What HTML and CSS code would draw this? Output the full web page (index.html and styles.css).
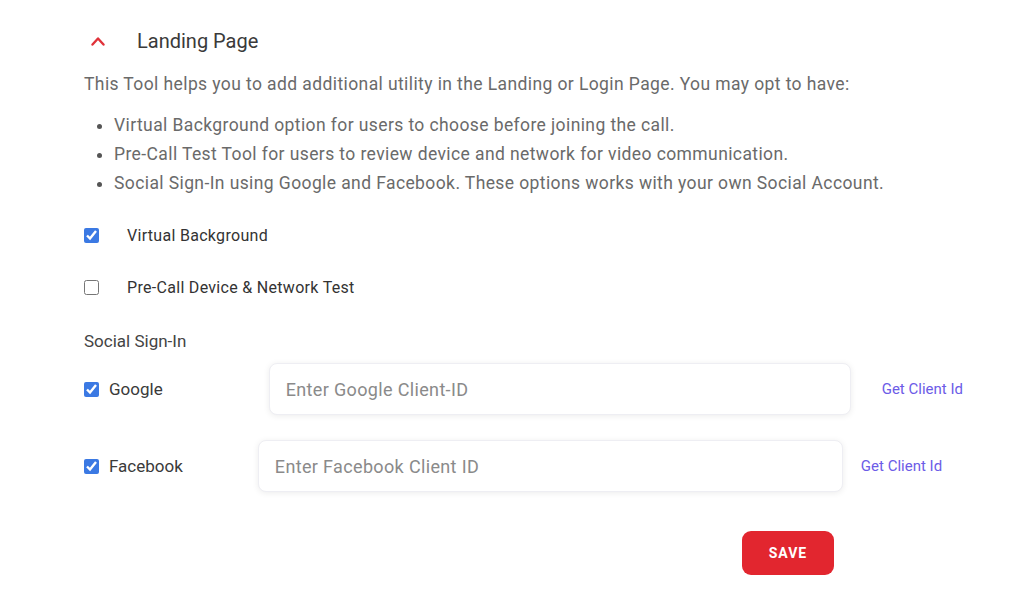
FILE: index.html
```html
<!DOCTYPE html>
<html>
<head>
<meta charset="utf-8">
<link rel="stylesheet" href="styles.css">
</head>
<body>
<div class="panel">
  <div class="header">
    <svg class="chev" width="14" height="10" viewBox="0 0 14 10"><path d="M1.5 8.5 L7 2.5 L12.5 8.5" fill="none" stroke="#e0323a" stroke-width="2.4" stroke-linecap="round" stroke-linejoin="round"/></svg>
    <span class="title">Landing Page</span>
  </div>
  <p class="desc">This Tool helps you to add additional utility in the Landing or Login Page. You may opt to have:</p>
  <ul class="list">
    <li>Virtual Background option for users to choose before joining the call.</li>
    <li>Pre-Call Test Tool for users to review device and network for video communication.</li>
    <li>Social Sign-In using Google and Facebook. These options works with your own Social Account.</li>
  </ul>
  <label class="opt opt-first"><input type="checkbox" class="cb" checked><span>Virtual Background</span></label>
  <label class="opt opt-second"><input type="checkbox" class="cb"><span>Pre-Call Device &amp; Network Test</span></label>
  <div class="social-title">Social Sign-In</div>
  <div class="srow srow-google">
    <label class="slabel"><input type="checkbox" class="cb" checked><span>Google</span></label>
    <input class="field" type="text" placeholder="Enter Google Client-ID">
    <a class="link" href="#">Get Client Id</a>
  </div>
  <div class="srow srow-fb">
    <label class="slabel"><input type="checkbox" class="cb" checked><span>Facebook</span></label>
    <input class="field" type="text" placeholder="Enter Facebook Client ID">
    <a class="link" href="#">Get Client Id</a>
  </div>
  <div class="actions"><button class="save">SAVE</button></div>
</div>
</body>
</html>
```
FILE: styles.css
```css
* { box-sizing: border-box; }
body {
  margin: 0;
  background: #fff;
  font-family: Roboto, "Liberation Sans", sans-serif;
  color: #333;
}
.panel {
  padding: 27px 0 0 84px;
  width: 1034px;
}
.header {
  display: flex;
  align-items: center;
  height: 28px;
}
.chev { margin-left: 7px; }
.title {
  margin-left: 32px;
  font-size: 20px;
  color: #3a3a3a;
}
.desc {
  margin: 17px 0 0 0;
  font-size: 17.5px;
  letter-spacing: 0.4px;
  color: #6a6a6a;
  line-height: 24px;
}
.list {
  margin: 15px 0 0 0;
  padding-left: 30px;
  font-size: 17.5px;
  letter-spacing: 0.4px;
  color: #6a6a6a;
  line-height: 29px;
}
.list li::marker { color: #555; }
.opt {
  display: flex;
  align-items: center;
  font-size: 16px;
  letter-spacing: 0.3px;
  color: #333;
  height: 24px;
}
.opt-first { margin-top: 25px; }
.opt-second { margin-top: 28px; }
.opt span { margin-left: 28px; }
.cb {
  margin: 0;
  width: 15px;
  height: 15px;
  accent-color: #3b79e3;
}
.social-title {
  margin-top: 32px;
  font-size: 17px;
  color: #444;
}
.srow {
  display: flex;
  align-items: center;
}
.srow-google { margin-top: 12px; }
.srow-fb { margin-top: 25px; }
.slabel {
  display: flex;
  align-items: center;
  font-size: 17px;
  color: #3a3a3a;
}
.slabel span { margin-left: 10px; }
.field {
  height: 52px;
  border: 1px solid #eeeef3;
  border-radius: 8px;
  box-shadow: 0 1px 6px rgba(0,0,0,0.08);
  padding: 0 16px;
  font-family: inherit;
  font-size: 18px;
  letter-spacing: 0.35px;
  color: #333;
  outline: none;
}
.field::placeholder { color: #8a8a8a; }
.srow-google .field { margin-left: 106px; width: 582px; }
.srow-fb .field { margin-left: 75px; width: 585px; }
.link {
  font-size: 15px;
  color: #6c5ce7;
  text-decoration: none;
}
.srow-google .link { margin-left: 31px; }
.srow-fb .link { margin-left: 18px; }
.actions {
  margin-top: 39px;
  padding-left: 658px;
}
.save {
  width: 92px;
  height: 44px;
  background: #e2262f;
  border: none;
  border-radius: 9px;
  color: #fff;
  font-family: inherit;
  font-weight: 700;
  font-size: 14px;
  letter-spacing: 1px;
}
```
